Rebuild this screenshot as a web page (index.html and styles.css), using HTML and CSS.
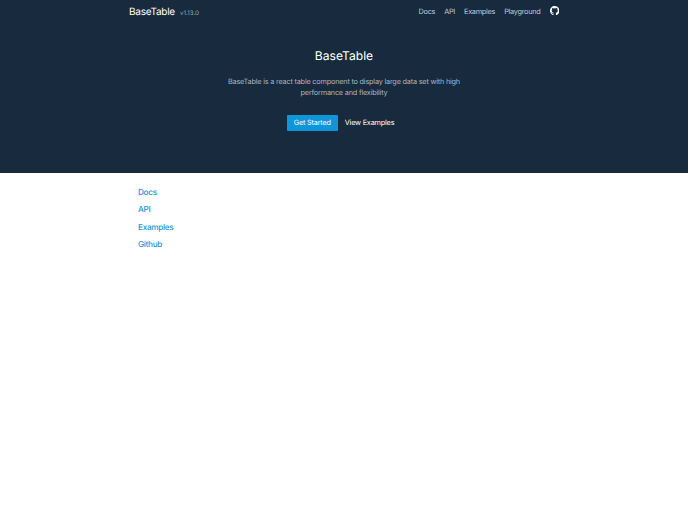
FILE: index.html
```html
<!DOCTYPE html>
<html lang="en">
<head>
<meta charset="utf-8">
<title>BaseTable</title>
<link rel="stylesheet" href="styles.css">
</head>
<body>
<div class="hero">
  <header class="bar">
    <div class="brand"><span class="name">BaseTable</span><span class="version">v1.13.0</span></div>
    <nav class="nav">
      <a href="#">Docs</a>
      <a href="#">API</a>
      <a href="#">Examples</a>
      <a href="#">Playground</a>
      <a href="#" class="gh" aria-label="GitHub"><svg viewBox="0 0 16 16" width="9.5" height="9.5"><path fill="#fff" d="M8 0C3.58 0 0 3.58 0 8c0 3.54 2.29 6.53 5.47 7.59.4.07.55-.17.55-.38 0-.19-.01-.82-.01-1.49-2.01.37-2.53-.49-2.69-.94-.09-.23-.48-.94-.82-1.13-.28-.15-.68-.52-.01-.53.63-.01 1.08.58 1.23.82.72 1.21 1.87.87 2.33.66.07-.52.28-.87.51-1.07-1.78-.2-3.64-.89-3.64-3.95 0-.87.31-1.59.82-2.15-.08-.2-.36-1.02.08-2.12 0 0 .67-.21 2.2.82.64-.18 1.32-.27 2-.27s1.36.09 2 .27c1.53-1.04 2.2-.82 2.2-.82.44 1.1.16 1.92.08 2.12.51.56.82 1.27.82 2.15 0 3.07-1.87 3.75-3.65 3.95.29.25.54.73.54 1.48 0 1.07-.01 1.93-.01 2.2 0 .21.15.46.55.38A8.01 8.01 0 0 0 16 8c0-4.42-3.58-8-8-8z"/></svg></a>
    </nav>
  </header>
  <div class="intro">
    <h1>BaseTable</h1>
    <p>BaseTable is a react table component to display large data set with high performance and flexibility</p>
    <div class="actions">
      <a href="#" class="btn primary">Get Started</a>
      <a href="#" class="btn">View Examples</a>
    </div>
  </div>
</div>
<main class="links">
  <a href="#">Docs</a>
  <a href="#">API</a>
  <a href="#">Examples</a>
  <a href="#">Github</a>
</main>
</body>
</html>
```
FILE: styles.css
```css
* { box-sizing: border-box; }
html, body { margin: 0; padding: 0; }
body { background: #fff; font-family: Inter, "Liberation Sans", sans-serif; text-rendering: geometricPrecision; }
a { text-decoration: none; }
.hero { background: #182a3e; height: 173px; display: flex; flex-direction: column; }
.bar { width: 430px; margin: 0 auto; height: 23px; display: flex; justify-content: space-between; align-items: center; }
.brand { display: flex; align-items: baseline; }
.name { color: #fff; font-size: 10px; letter-spacing: -0.25px; }
.version { color: #9aa6b2; font-size: 6.2px; margin-left: 5px; }
.nav { display: flex; align-items: center; gap: 9px; }
.nav a { color: #c3cad1; font-size: 7.3px; letter-spacing: -0.26px; }
.nav .gh { display: flex; margin-top: -2px; }
.intro { text-align: center; padding-top: 24px; }
h1 { margin: 0; color: #fff; font-size: 12.1px; font-weight: 400; line-height: 17px; }
p { margin: 12px auto 0; width: 240px; color: #adb5bf; font-size: 7.3px; letter-spacing: -0.2px; line-height: 11px; }
.actions { display: flex; justify-content: center; margin-top: 16.5px; }
.btn { color: #fff; font-size: 7.3px; letter-spacing: -0.2px; line-height: 16px; padding: 0 7px; border-radius: 1px; }
.primary { background: #0f96da; }
.links { width: 412px; margin: 0 auto; padding-top: 11px; display: flex; flex-direction: column; align-items: flex-start; }
.links a { color: #1a96d4; font-size: 8.2px; font-weight: 500; letter-spacing: -0.3px; line-height: 17.4px; }
```
